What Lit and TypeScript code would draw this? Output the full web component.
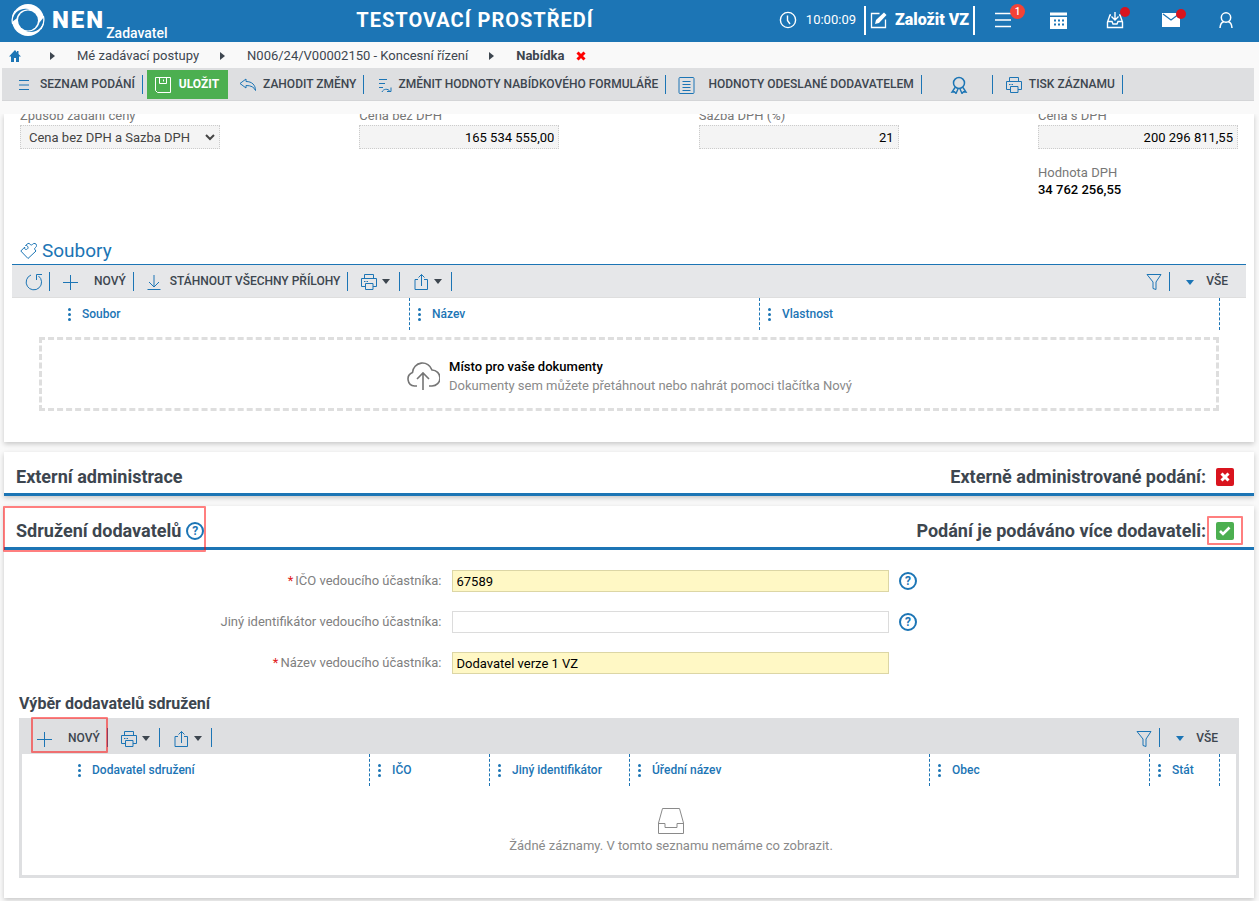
import { LitElement, html, svg, css, nothing, type TemplateResult } from "lit";
import { customElement } from "lit/decorators.js";

const line = (w: number, h: number, body: TemplateResult) => html`<svg
  class="ico" width=${w} height=${h} viewBox="0 0 ${w} ${h}" fill="none" stroke="currentColor" aria-hidden="true">${body}</svg>`;

const icons = {
  logo: line(34, 34, svg`<circle cx="17" cy="17" r="16" fill="#fff" stroke="none"/><circle cx="17" cy="17.500" r="10" fill="#1c75b5" stroke="none"/>
    <path d="M1 19C2 9 10 3.500 20 6.500c-8-1-13 3-14.500 9zM33 14c0 11-8 17-18 14.500 7 .5 12-3 13.500-9z" fill="#1c75b5" stroke="none"/>
    <path d="M1.600 21A16 16 0 0 1 4 8M32.400 13A16 16 0 0 1 30 26" stroke="#fff" stroke-width="1.2"/>`),
  clock: line(18, 18, svg`<circle cx="9" cy="9" r="7.6" stroke-width="1.4"/><path d="M8.500 4.500v5l2.500 3.500" stroke-width="1.4"/>`),
  edit: line(18, 18, svg`<path d="M9.500 2.500h-8v14h14v-8" stroke-width="1.3"/><path d="m5 13 1-4 8-7.500 2.500 2.500-7.500 8z" fill="currentColor" stroke="none"/>`),
  menu: line(18, 16, svg`<path d="M1 1.500h16M1 8h16M1 14.500h16" stroke-width="1.6"/>`),
  calendar: line(17, 17, svg`<path d="M0 .5h17v3H0zM0 5h17v12H0z" fill="currentColor" stroke="none"/><path d="M4 8.500h2m2 0h2m2 0h2M4 12.500h2m2 0h2m2 0h2" stroke="#1c75b5" stroke-width="2"/>`),
  inbox: line(18, 18, svg`<path d="M5 4H4L1.500 11v5.500h15V11L14 4h-1M1.500 10.500H6l1 2.500h4l1-2.500h4.500M9 1v7.500M5.500 5.500 9 9l3.500-3.500" stroke-width="1.4"/>`),
  mail: line(18, 14, svg`<path d="M0 0h18v14H0z" fill="currentColor" stroke="none"/><path d="m1 1 8 6 8-6" stroke="#1c75b5" stroke-width="1.2"/>`),
  user: line(16, 18, svg`<circle cx="8" cy="6.500" r="4.700" stroke-width="1.5"/><path d="M2 17c.3-4 2-6 4-6.500M14 17c-.3-4-2-6-4-6.500" stroke-width="1.5"/>`),
  home: line(12, 12, svg`<path d="M6 0 0 6.500h2V12h3V8h2v4h3V6.500h2L9.500 4V1H8v1.500z" fill="currentColor" stroke="none"/>`),
  crumb: line(5, 8, svg`<path d="M0 0v8l5-4z" fill="currentColor" stroke="none"/>`),
  cross: line(10, 10, svg`<path d="m1.500 1.500 7 7m0-7-7 7" stroke-width="3"/>`),
  list: line(12, 10, svg`<path d="M1 .5h10M1 5h10M1 9.500h10"/>`),
  save: line(18, 18, svg`<path d="M1.500 1.500h15v15h-13l-2-2zM5.500 2v5.500h7V2M9.500 3.500v2"/>`),
  undo: line(18, 14, svg`<path d="M7 1 1 5.500 7 10V7.500c5 0 8 1.500 9.500 5C16.500 7 13 3.500 7 3.500z"/>`),
  change: line(14, 16, svg`<path d="M1 2.500h8M1 6.500h6M1 10.500h4M4 15c1-3 6-4 8-.5M13 10.500v4H9"/>`),
  sheet: line(17, 17, svg`<rect x="1" y=".5" width="15" height="16" rx="1"/><path d="M4.500 4.500h8M4.500 7.500h8M4.500 10.500h8M4.500 13.500h8"/>`),
  award: line(18, 18, svg`<circle cx="9" cy="7" r="5.500" stroke-width="1.5"/><path d="M5 11.500 2 16l2.500-.3L6 17.500l2-4.500M13 11.500l3 4.500-2.500-.3L12 17.500 10 13" stroke-width="1.4"/>`),
  printer: line(18, 18, svg`<path d="M4.500 5.500v-4h9v4M5 13.500H1.500v-8h15v8H13M5.500 10.500h7.500v6H5.500zM4 8.500h1.500m1 0H8"/>`),
  puzzle: line(17, 18, svg`<path d="m.8 9 4-4c-1 3 2 3 3 1.500S7 3 5.500 3.500L8 1.500c2-1 2 2 3.500 1.500S13 1 15 1.500s2 3 .5 4-1 2 .5 3.500l-8 7.500z"/>`),
  refresh: line(18, 18, svg`<path d="M6 2a7.700 7.700 0 1 0 7.500 1M11.500 7V1.500H17"/>`),
  plus: line(16, 16, svg`<path d="M8.500 1v15M1 8.500h15"/>`),
  download: line(14, 17, svg`<path d="M7 1v11.500M2 8l5 5 5-5M.5 15.500h13"/>`),
  share: line(18, 18, svg`<path d="M6 6.500H3v10h12.500v-10H12M9.500 13V1.500M6.500 4.500l3-3 3 3"/>`),
  funnel: line(16, 18, svg`<path d="M1 1.500h14l-5 7.500v7.500l-3-1V9z"/>`),
  down: line(8, 5, svg`<path d="M0 0h8L4 5z" fill="currentColor" stroke="none"/>`),
  check: line(12, 10, svg`<path d="m1 5 3 3 6.500-6.500" stroke-width="2.600"/>`),
  chevron: line(10, 7, svg`<path d="m1 1 4 4 4-4" stroke-width="2"/>`),
  cloud: line(34, 32, svg`<path d="M11 26H8.500a7 7 0 0 1-2-13.500A10 10 0 0 1 26 10a8 8 0 0 1 0 16h-3M17 30V14M11 19l6-6 6 6" stroke-width="1.600"/>`),
  tray: line(26, 26, svg`<path d="M4.500.5h17l4 14.500v10.500H.5V15zM.5 15.500H7v4h12v-4h6.500"/>`),
};

const sep = html`<span class="sep"></span>`;
const help = html`<button class="help" aria-label="Nápověda">?</button>`;

const grid = (names: string[], kind: string) => html`<table class="grid ${kind}">
  <thead><tr><td></td>${names.map((n) => html`<th scope="col"><span class="th"><span class="dots"><i></i><i></i><i></i></span>${n}</span></th>`)}<td></td></tr></thead>
</table>`;

const tools = html`
  <button class="tool drop" aria-label="Tisk">${icons.printer}<span class="dark">${icons.down}</span></button>${sep}
  <button class="tool drop" aria-label="Export">${icons.share}<span class="dark">${icons.down}</span></button>${sep}`;

const views = html`<div class="right">
  <button class="tool funnel" aria-label="Filtr">${icons.funnel}</button>${sep}
  <button class="tool all">${icons.down}<span>VŠE</span></button></div>`;

const price = (id: string, label: string, value: string, total?: string) => html`<div class="field">
  <label for=${id}>${label}</label>
  <input id=${id} class="locked" readonly .value=${value} />
  ${total ? html`<span class="caption">Hodnota DPH</span><b class="total">${total}</b>` : nothing}
</div>`;

const entry = (id: string, label: string, value: string, required: boolean, hint: boolean) => html`
  <label for=${id}>${required ? html`<span class="star">*</span>` : nothing}${label}:</label>
  <input id=${id} class=${required ? "required" : ""} .value=${value} />
  <span>${hint ? help : nothing}</span>`;

@customElement("app-root")
export class AppRoot extends LitElement {
  static styles = css`
    :host { display: flex; flex-direction: column; height: 100vh; background: #f9f9f9; font: 13px/16px Roboto, sans-serif; color: #3d464f; }
    * { box-sizing: border-box; }
    button { font: inherit; color: inherit; background: none; border: 0; padding: 0; margin: 0; cursor: pointer; }
    a { color: inherit; text-decoration: none; }
    h1, h2, h3 { margin: 0; font-weight: 700; }
    .ico { display: block; flex: none; }
    .top { display: flex; align-items: center; height: 42px; flex: none; background: #1c75b5; color: #fff; padding: 0 25px 2px 11px; position: relative; }
    .brand { display: flex; align-items: center; align-self: stretch; }
    .nen { font-size: 24px; line-height: 28px; font-weight: 900; letter-spacing: 2px; margin-left: 7px; }
    .role { font-size: 14px; line-height: 14px; align-self: flex-end; font-weight: 500; margin-left: 1px; }
    .env { position: absolute; left: 0; right: 309px; text-align: center; font-size: 20px; line-height: 24px; font-weight: 700; letter-spacing: 1px; }
    .actions { display: flex; align-items: center; margin-left: auto; }
    .time { display: flex; align-items: center; gap: 9px; margin-right: 8px; }
    .create { display: flex; align-items: center; gap: 7px; height: 29px; border: solid #fff; border-width: 0 2px; padding: 0 4px; font-size: 16px; font-weight: 900; margin-right: 19px; }
    .quick { display: flex; align-items: center; justify-content: space-between; width: 240px; }
    .quick button { position: relative; }
    .dot { position: absolute; width: 10px; height: 10px; border-radius: 50%; background: #d9141e; right: -6px; top: -4px; }
    .count { position: absolute; width: 15px; height: 15px; border-radius: 50%; background: #f44336; right: -13px; top: -8px; font-size: 10px; line-height: 15px; font-weight: 500; }
    .crumbs { display: flex; align-items: center; height: 26px; flex: none; padding: 1px 9px 0; }
    .home { color: #1c75b5; margin-right: 29px; }
    .crumbs .next { margin: 0 22px 0 21px; }
    .crumbs .home + .next { margin-left: 0; }
    .crumbs b { font-weight: 700; margin-right: 12px; }
    .close { color: #f00; }
    .bar { display: flex; align-items: center; flex: none; color: #1c75b5; font-size: 12px; font-weight: 500; }
    .tool span { color: #3d464f; }
    .main { height: 33px; margin: 0 5px 0 2px; background: #dedfe1; border-bottom: 1px solid #d4d5d7; padding-left: 16px; }
    .sep { width: 1px; height: 19px; background: #1c75b5; flex: none; }
    .tool { display: flex; align-items: center; gap: 6px; }
    .tool > .ico { margin-top: 2px; }
    .main .tool { padding: 0 7px 0 0; height: 29px; }
    .main .sep + .tool { padding-left: 12px; }
    .main .list { gap: 10px; }
    .main .sep + .change { padding-left: 14px; }
    .main .sep + .save { background: #4caf50; color: #fff; gap: 7px; padding: 0 9px 0 7px; margin: 0 11px 0 4px; }
    .save span { color: #fff; font-weight: 700; }
    .main .sep + .award { padding: 0 24px 0 28px; }
    .main .sheet { gap: 13px; }
    .scroll { margin-top: 13px; flex: 1; min-height: 0; overflow: hidden; padding: 0 5px 4px 4px; display: flex; flex-direction: column; gap: 10px; }
    .card { background: #fff; box-shadow: 0 2px 5px rgba(0, 0, 0, .2); flex: none; }
    .first { padding: 0 8px 31px; }
    .prices { display: flex; justify-content: space-between; padding: 0 8px; margin-top: -6px; height: 128px; }
    .field { width: 200px; display: flex; flex-direction: column; color: #777; }
    .field label { margin-bottom: 1px; }
    input, .pick select { font: 13px/16px Roboto, sans-serif; color: #000; margin: 0; }
    .locked, .pick select { width: 100%; height: 24px; background: #f4f4f4; border: 1px dotted #ccc; border-radius: 0; }
    .locked { text-align: right; padding: 0 4px; }
    .caption { margin-top: 16px; }
    .total { color: #000; font-weight: 500; margin-top: 1px; }
    .pick { display: grid; color: #444; }
    .pick select { grid-area: 1 / 1; appearance: none; color: #444; padding: 1px 8px 0; }
    .pick .ico { grid-area: 1 / 1; justify-self: end; align-self: center; margin-right: 5px; pointer-events: none; }
    .files { display: flex; align-items: center; gap: 5px; height: 29px; padding: 2px 8px 0; color: #1c75b5; border-bottom: 1px solid #1c75b5; }
    .files h2 { font-size: 19px; line-height: 24px; font-weight: 400; }
    .list-bar { height: 33px; background: #e6e7e9; border-bottom: 1px solid #dedede; padding-left: 13px; }
    .list-bar .tool, .sub .tool { padding: 0 7px; height: 22px; }
    .list-bar .reload { padding: 0 6px 0 0; }
    .list-bar .plus, .sub .plus { gap: 16px; padding-left: 12px; }
    .list-bar .download { padding-left: 13px; gap: 9px; }
    .bar .tool.drop { padding: 0 9px 0 12px; width: 51px; gap: 4px; }
    .drop .dark { padding-top: 1px; }
    .right { display: flex; align-items: center; margin-left: auto; }
    .bar .tool.all { gap: 12px; padding: 0 18px 0 16px; }
    .grid { width: 100%; table-layout: fixed; border-collapse: separate; border-spacing: 0; font-size: 12px; line-height: 16px; }
    .grid th, .grid td { height: 32px; padding: 0; }
    .grid th { border-right: 1px dashed #1c75b5; color: #1c75b5; font-weight: 500; text-align: left; }
    .grid td:first-child { width: 48px; }
    .grid td:last-child { width: 26px; }
    .files-grid th:nth-child(2), .files-grid th:nth-child(3) { width: 350px; }
    .th { display: flex; align-items: center; gap: 11px; padding-left: 8px; }
    .dots { display: flex; flex-direction: column; gap: 2px; }
    .dots i { width: 3px; height: 3px; border-radius: 50%; background: #1c75b5; }
    .zone { margin: 7px 27px 0; padding-top: 4px; height: 74px; border: 3px dashed #dedede; display: flex; align-items: center; justify-content: center; gap: 9px; color: #757575; }
    .zone p { margin: 0; line-height: 19px; color: #8a8a8a; }
    .zone b { display: block; color: #000; font-weight: 500; }
    .head { display: flex; align-items: center; justify-content: space-between; height: 44px; padding: 8px 20px 0 12px; border-bottom: 3px solid #1c75b5; position: relative; }
    .head h2, .flag label { font-size: 18px; line-height: 24px; font-weight: 700; }
    .title, .flag { display: flex; align-items: center; gap: 5px; }
    .flag { gap: 10px; }
    .tick { display: grid; place-items: center; color: #fff; }
    .tick input { grid-area: 1 / 1; appearance: none; width: 18px; height: 18px; border-radius: 2px; background: #d9141e; }
    .tick input:checked { background: #4caf50; }
    .tick .ico { grid-area: 1 / 1; pointer-events: none; }
    .help { width: 18px; height: 18px; border: 2px solid #1c75b5; border-radius: 50%; color: #1c75b5; font-size: 12px; line-height: 14px; font-weight: 700; display: block; }
    .mark { position: absolute; border: 2px solid rgba(255, 0, 0, .5); border-radius: 1px; pointer-events: none; }
    .mark-title { left: -1px; top: 0; width: 203px; height: 46px; }
    .mark-flag { right: 11px; top: 10px; width: 36px; height: 29px; }
    .mark-new { left: 9px; top: -1px; width: 77px; height: 36px; }
    .form { display: grid; grid-template-columns: 35% 35% auto; column-gap: 10px; row-gap: 19px; align-items: center; padding: 20px 0; color: #808080; }
    .form label { text-align: right; }
    .form input { height: 22px; border: 1px solid #dcdcdc; padding: 0 4px; width: 100%; }
    .form .required { background: #fff8c5; border-color: #dcd6a5; }
    .star { color: #e02020; margin-right: 2px; }
    .members { margin: 0 15px; padding-bottom: 20px; }
    .members h3 { font-size: 16px; line-height: 20px; margin-bottom: 4px; }
    .box { border: solid #dedfe1; border-width: 0 3px 3px; }
    .sub { height: 36px; background: #dedfe1; position: relative; padding: 3px 0 0 2px; }
    .members-grid th:nth-child(2), .members-grid th:nth-child(5) { width: 300px; }
    .members-grid th:nth-child(3) { width: 120px; }
    .members-grid th:nth-child(4) { width: 140px; }
    .members-grid th:nth-child(6) { width: 220px; }
    .members-grid td:last-child { width: 16px; }
    .none { display: flex; flex-direction: column; align-items: center; gap: 4px; padding: 22px 0 21px 84px; color: #8a8a8a; }
  `;

  render() {
    return html`
      <header class="top">
        <div class="brand">${icons.logo}<span class="nen">NEN</span><span class="role">Zadavatel</span></div>
        <div class="env">TESTOVACÍ PROSTŘEDÍ</div>
        <div class="actions">
          <span class="time">${icons.clock}10:00:09</span>
          <button class="create">${icons.edit}Založit VZ</button>
          <div class="quick">
            <button aria-label="Nabídka">${icons.menu}<span class="count">1</span></button>
            <button aria-label="Kalendář">${icons.calendar}</button>
            <button aria-label="Přijaté">${icons.inbox}<span class="dot"></span></button>
            <button aria-label="Zprávy">${icons.mail}<span class="dot"></span></button>
            <button aria-label="Uživatel">${icons.user}</button>
          </div>
        </div>
      </header>
      <nav class="crumbs">
        <a class="home" href="#" aria-label="Domů">${icons.home}</a><span class="next">${icons.crumb}</span>
        <a href="#">Mé zadávací postupy</a><span class="next">${icons.crumb}</span>
        <a href="#">N006/24/V00002150 - Koncesní řízení</a><span class="next">${icons.crumb}</span>
        <b>Nabídka</b><button class="close" aria-label="Zavřít">${icons.cross}</button>
      </nav>
      <div class="bar main">
        <button class="tool list">${icons.list}<span>SEZNAM PODÁNÍ</span></button>${sep}
        <button class="tool save">${icons.save}<span>ULOŽIT</span></button>
        <button class="tool">${icons.undo}<span>ZAHODIT ZMĚNY</span></button>${sep}
        <button class="tool change">${icons.change}<span>ZMĚNIT HODNOTY NABÍDKOVÉHO FORMULÁŘE</span></button>${sep}
        <button class="tool sheet">${icons.sheet}<span>HODNOTY ODESLANÉ DODAVATELEM</span></button>${sep}
        <button class="tool award" aria-label="Certifikát">${icons.award}</button>${sep}
        <button class="tool">${icons.printer}<span>TISK ZÁZNAMU</span></button>${sep}
      </div>
      <main class="scroll">
        <section class="card first">
          <div class="prices">
            <div class="field">
              <label for="mode">Způsob zadání ceny</label>
              <div class="pick"><select id="mode"><option>Cena bez DPH a Sazba DPH</option></select>${icons.chevron}</div>
            </div>
            ${price("net", "Cena bez DPH", "165 534 555,00")}
            ${price("rate", "Sazba DPH (%)", "21")}
            ${price("gross", "Cena s DPH", "200 296 811,55", "34 762 256,55")}
          </div>
          <div class="files">${icons.puzzle}<h2>Soubory</h2></div>
          <div class="bar list-bar">
            <button class="tool reload" aria-label="Obnovit">${icons.refresh}</button>${sep}
            <button class="tool plus">${icons.plus}<span>NOVÝ</span></button>${sep}
            <button class="tool download">${icons.download}<span>STÁHNOUT VŠECHNY PŘÍLOHY</span></button>${sep}
            ${tools}${views}
          </div>
          ${grid(["Soubor", "Název", "Vlastnost"], "files-grid")}
          <div class="zone">${icons.cloud}<p><b>Místo pro vaše dokumenty</b>Dokumenty sem můžete přetáhnout nebo nahrát pomoci tlačítka Nový</p></div>
        </section>
        <section class="card">
          <div class="head">
            <h2>Externí administrace</h2>
            <div class="flag"><label for="external">Externě administrované podání:</label>
              <span class="tick"><input id="external" type="checkbox" />${icons.cross}</span></div>
          </div>
        </section>
        <section class="card">
          <div class="head">
            <div class="title"><h2>Sdružení dodavatelů</h2>${help}</div>
            <div class="flag"><label for="joint">Podání je podáváno více dodavateli:</label>
              <span class="tick"><input id="joint" type="checkbox" checked />${icons.check}</span></div>
            <span class="mark mark-title"></span><span class="mark mark-flag"></span>
          </div>
          <div class="form">
            ${entry("ico", "IČO vedoucího účastníka", "67589", true, true)}
            ${entry("other", "Jiný identifikátor vedoucího účastníka", "", false, true)}
            ${entry("name", "Název vedoucího účastníka", "Dodavatel verze 1 VZ", true, false)}
          </div>
          <div class="members">
            <h3>Výběr dodavatelů sdružení</h3>
            <div class="box">
              <div class="bar sub">
                <button class="tool plus">${icons.plus}<span>NOVÝ</span></button>${sep}
                ${tools}${views}
                <span class="mark mark-new"></span>
              </div>
              ${grid(["Dodavatel sdružení", "IČO", "Jiný identifikátor", "Úřední název", "Obec", "Stát"], "members-grid")}
              <div class="none">${icons.tray}<span>Žádné záznamy. V tomto seznamu nemáme co zobrazit.</span></div>
            </div>
          </div>
        </section>
      </main>`;
  }
}
